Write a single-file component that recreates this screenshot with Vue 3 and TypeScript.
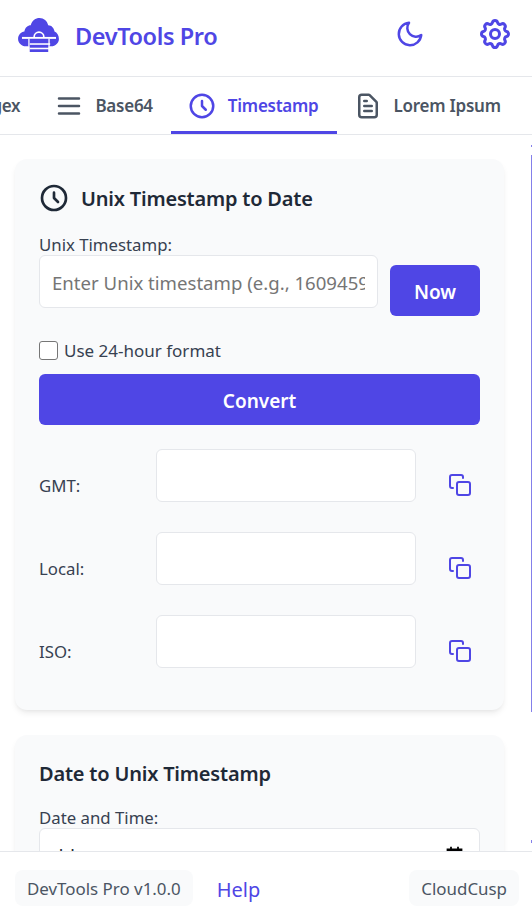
<script setup lang="ts">
const rows = ['GMT:', 'Local:', 'ISO:']
</script>

<template>
  <div class="app">
    <header class="header">
      <div class="brand">
        <svg class="logo" viewBox="0 0 42 36" width="41" height="35">
          <path fill="#4f46e5" d="M8 30C3.500 30 0 26.500 0 22.500 0 18.500 3 15.500 6.500 15 7 11 10 8.500 13 8.500 14.500 3.500 18 1 22 1c4.500 0 8 3 9 7.500 3.500 0 6 3 6.500 6.500 2.500 1 4.500 4 4.500 7.500 0 4-3.500 7.500-8 7.500z"/>
          <path fill="none" stroke="#fff" stroke-width="1.700" d="M16.500 20.500a5 5 0 0 1 10 0"/>
          <rect x="4" y="20.500" width="35" height="2" fill="#fff"/>
          <rect x="10.500" y="22.500" width="1.500" height="8" fill="#fff"/>
          <rect x="31" y="22.500" width="1.500" height="8" fill="#fff"/>
          <rect x="12" y="22.500" width="19" height="13.500" fill="#4f46e5"/>
          <rect x="12" y="27" width="21" height="1.600" fill="#fff"/>
          <rect x="12" y="31.600" width="21" height="1.600" fill="#fff"/>
        </svg>
        <span class="brand-name">DevTools Pro</span>
      </div>
      <div class="actions">
        <svg class="moon" viewBox="0 0 24 24" width="30" height="30" fill="none" stroke="#4f46e5" stroke-width="2" stroke-linecap="round" stroke-linejoin="round"><path d="M21 12.790A9 9 0 1 1 11.210 3 7 7 0 0 0 21 12.790z"/></svg>
        <svg class="gear" viewBox="0 0 24 24" width="36" height="36" fill="none" stroke="#4f46e5" stroke-width="2" stroke-linecap="round" stroke-linejoin="round"><path d="M10.325 4.317c.426-1.756 2.924-1.756 3.350 0a1.724 1.724 0 0 0 2.573 1.066c1.543-.940 3.310.826 2.370 2.370a1.724 1.724 0 0 0 1.065 2.572c1.756.426 1.756 2.924 0 3.350a1.724 1.724 0 0 0-1.066 2.573c.940 1.543-.826 3.310-2.370 2.370a1.724 1.724 0 0 0-2.572 1.065c-.426 1.756-2.924 1.756-3.350 0a1.724 1.724 0 0 0-2.573-1.066c-1.543.940-3.310-.826-2.370-2.370a1.724 1.724 0 0 0-1.065-2.572c-1.756-.426-1.756-2.924 0-3.350a1.724 1.724 0 0 0 1.066-2.573c-.940-1.543.826-3.310 2.370-2.370.996.608 2.296.070 2.572-1.065z"/><path d="M15 12a3 3 0 1 1-6 0 3 3 0 0 1 6 0z"/></svg>
      </div>
    </header>
    <nav class="tabs">
      <div class="tab-strip">
        <div class="tab tab-regex"><span>Regex</span></div>
        <div class="tab">
          <svg viewBox="0 0 24 24" width="30" height="30" fill="none" stroke="currentColor" stroke-width="2" stroke-linecap="round"><path d="M4 6h16M4 12h16M4 18h16"/></svg>
          <span>Base64</span>
        </div>
        <div class="tab active">
          <svg viewBox="0 0 24 24" width="30" height="30" fill="none" stroke="currentColor" stroke-width="2" stroke-linecap="round" stroke-linejoin="round"><path d="M12 8v4l3 3"/><circle cx="12" cy="12" r="9"/></svg>
          <span>Timestamp</span>
        </div>
        <div class="tab">
          <svg viewBox="0 0 24 24" width="30" height="30" fill="none" stroke="currentColor" stroke-width="2" stroke-linecap="round" stroke-linejoin="round"><path d="M9 12h6M9 16h6M17 21H7a2 2 0 0 1-2-2V5a2 2 0 0 1 2-2h5.586a1 1 0 0 1 .707.293l5.414 5.414a1 1 0 0 1 .293.707V19a2 2 0 0 1-2 2z"/><path d="M9 8h2"/></svg>
          <span>Lorem Ipsum</span>
        </div>
      </div>
    </nav>
    <main class="main">
      <section class="card first">
        <h2 class="card-title">
          <svg class="title-ico" viewBox="0 0 24 24" width="32" height="32" fill="none" stroke="#1f2937" stroke-width="2" stroke-linecap="round" stroke-linejoin="round"><path d="M12 8v4l3 3"/><circle cx="12" cy="12" r="9"/></svg>
          Unix Timestamp to Date
        </h2>
        <label class="lbl">Unix Timestamp:</label>
        <div class="ts-row">
          <input class="inp" type="text" placeholder="Enter Unix timestamp (e.g., 1609459200)" />
          <button class="btn now">Now</button>
        </div>
        <label class="check"><span class="box"></span><span class="check-text">Use 24-hour format</span></label>
        <button class="btn convert">Convert</button>
        <div class="results">
          <div v-for="r in rows" :key="r" class="res">
            <span class="res-lbl">{{ r }}</span>
            <div class="res-box"></div>
            <svg class="copy" viewBox="0 0 24 24" width="24" height="24" fill="none" stroke="#4f46e5" stroke-width="2" stroke-linecap="round" stroke-linejoin="round"><rect x="9" y="9" width="13" height="13" rx="2"/><path d="M5 15H4a2 2 0 0 1-2-2V4a2 2 0 0 1 2-2h9a2 2 0 0 1 2 2v1"/></svg>
          </div>
        </div>
      </section>
      <section class="card second">
        <h2 class="card-title plain">Date to Unix Timestamp</h2>
        <label class="lbl">Date and Time:</label>
        <div class="date-box">
          <span class="date-val">dd-mm-yyyy --:-- --</span>
          <svg class="cal" viewBox="0 0 24 24" width="21" height="21" fill="#000"><path d="M7 2h2v2h6V2h2v2h4v18H3V4h4z"/></svg>
        </div>
      </section>
      <i class="sb sb-up"></i>
      <i class="sb sb-thumb"></i>
      <i class="sb sb-down"></i>
    </main>
    <footer class="footer">
      <span class="chip">DevTools Pro v1.0.0</span>
      <a class="help">Help</a>
      <span class="chip right">CloudCusp</span>
    </footer>
  </div>
</template>

<style>
html, body { margin: 0; height: 100%; background: #fff; overflow: hidden; }
</style>

<style scoped>
.app { width: 532px; height: 913px; display: flex; flex-direction: column; font-family: "Noto Sans", "Open Sans", sans-serif; color: #1f2937; overflow: hidden; background: #fff; }
.header { height: 77px; flex: none; box-sizing: border-box; display: flex; align-items: center; justify-content: space-between; padding: 0 19px 8px 18px; border-bottom: 1px solid #e5e7eb; }
.brand { display: flex; align-items: center; gap: 16px; }
.logo { flex: none; }
.brand-name { font-size: 23.500px; font-weight: 600; color: #4f46e5; letter-spacing: -0.4px; padding-top: 4px; }
.actions { display: flex; align-items: center; gap: 52px; }
.moon, .gear { display: block; }
.tabs { height: 58px; flex: none; box-sizing: border-box; border-bottom: 1px solid #e5e7eb; overflow: hidden; }
.tab-strip { display: flex; margin-left: -29px; height: 57px; }
.tab { display: flex; align-items: center; gap: 11px; padding: 3px 18px 0 16px; font-size: 17px; font-weight: 600; letter-spacing: -0.25px; color: #4b5563; white-space: nowrap; box-sizing: border-box; border-bottom: 3px solid transparent; flex: none; }
.tab-regex { padding-left: 0; }
.tab.active { color: #4f46e5; border-bottom-color: #4f46e5; }
.main { flex: 1; min-height: 0; position: relative; overflow: hidden; padding: 24px 28px 0 15px; display: flex; flex-direction: column; gap: 25px; }
.card { background: #f9fafb; border-radius: 12px; padding: 24px 24px 42px; box-shadow: 0 4px 6px -1px rgba(0,0,0,.08), 0 2px 4px -2px rgba(0,0,0,.06); flex: none; }
.card-title { margin: 0; font-size: 20px; font-weight: 600; letter-spacing: -0.2px; line-height: 32px; height: 32px; display: flex; align-items: center; gap: 11px; color: #1f2937; }
.title-ico { margin: -3px 0 0 -1px; flex: none; }
.plain { line-height: 30px; height: 30px; }
.lbl { display: block; font-size: 16.800px; line-height: 22px; margin-top: 19px; height: 21px; color: #374151; }
.second .lbl { margin-top: 18px; }
.ts-row { display: flex; align-items: flex-start; gap: 12px; }
.inp { flex: 1; min-width: 0; height: 53px; box-sizing: border-box; border: 1px solid #e5e7eb; border-radius: 6px; padding: 2px 12px 0; font: 18.600px "Noto Sans", sans-serif; background: #fff; outline: none; }
.inp::placeholder { color: #757575; opacity: 1; }
.btn { border: 0; border-radius: 6px; background: #4f46e5; color: #fff; font: 600 19px "Noto Sans", sans-serif; padding: 2px 0 0; }
.now { width: 90px; height: 51px; margin-top: 10px; flex: none; }
.check { display: flex; align-items: center; gap: 7px; margin-top: 23px; font-size: 17px; color: #374151; line-height: 22px; }
.check-text { position: relative; top: 1px; margin-left: -1px; }
.box { width: 19px; height: 19px; border: 1.500px solid #767676; border-radius: 3px; background: #fff; box-sizing: border-box; flex: none; }
.convert { display: block; width: 100%; height: 51px; margin-top: 13px; }
.results { margin-top: 24px; display: flex; flex-direction: column; gap: 30px; }
.res { display: flex; align-items: flex-end; height: 53px; }
.res-lbl { width: 117px; font-size: 16.800px; line-height: 22px; color: #374151; flex: none; margin-bottom: 5px; }
.res-box { width: 260px; height: 53px; box-sizing: border-box; border: 1px solid #e5e7eb; border-radius: 6px; background: #fff; flex: none; }
.copy { margin: 0 0 5px 32px; flex: none; }
.date-box { height: 53px; box-sizing: border-box; border: 1px solid #e5e7eb; border-radius: 6px; background: #fff; display: flex; align-items: center; justify-content: space-between; padding: 2px 14px 0 12px; font-size: 18.600px; color: #1f2937; }
.cal { margin-top: 0; flex: none; }
.sb { position: absolute; right: 0; width: 1px; background: #8480ea; display: block; }
.sb-up { top: 10px; height: 2px; }
.sb-thumb { top: 20px; height: 557px; }
.sb-down { top: 705px; height: 3px; }
.footer { height: 62px; flex: none; box-sizing: border-box; border-top: 1px solid #e5e7eb; display: flex; align-items: flex-start; padding: 18px 13px 0 15px; background: #fff; position: relative; z-index: 1; }
.chip { background: #f9fafb; border-radius: 8px; padding: 0 12px; height: 36px; display: flex; align-items: center; font-size: 16.900px; color: #4b5563; }
.help { margin-left: 24px; font-size: 20px; line-height: 40px; color: #4f46e5; }
.right { margin-left: auto; }
</style>
